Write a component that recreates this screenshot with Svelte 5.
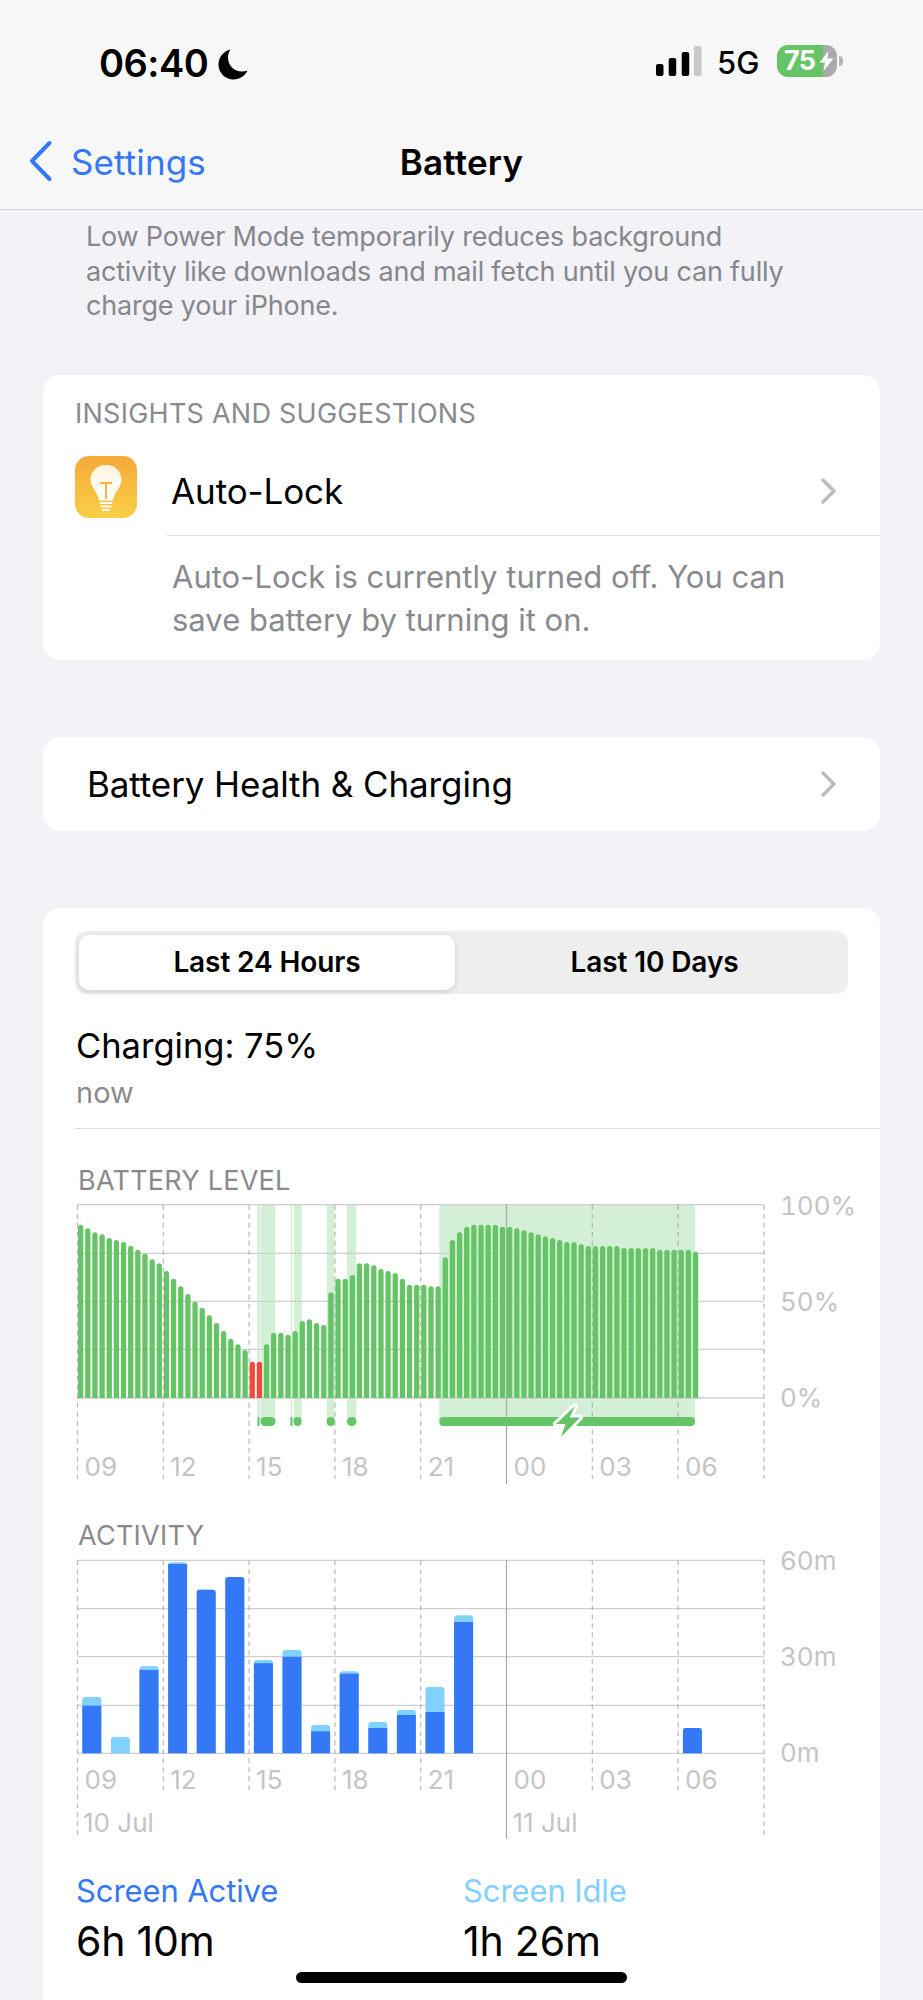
<script>
  // tops of the 15 minute bars, measured from the chart zoom (3x), base is 687
  const levelTops = [167,178,190,196,207,213,219,230,242,254,271,283,306,329,352,375,398,416,439,462,486,509,526,543,578,578,526,491,491,497,486,456,451,462,468,370,329,329,318,283,283,289,300,306,312,329,347,347,347,352,352,265,213,190,173,167,167,167,167,173,173,178,184,190,196,202,207,213,219,219,225,231,231,231,231,231,237,237,237,237,237,242,242,242,242,242,248];
  const levelBars = levelTops.map((top, i) => ({
    x: 78.0 + i * 7.15,
    y: 1170 + top / 3,
    h: (687 - top) / 3,
    low: i === 24 || i === 25
  }));

  const gridX = [0, 1, 2, 3, 4, 5, 6, 7, 8].map((i) => 77.5 + i * 85.8);
  const hours = ['09', '12', '15', '18', '21', '00', '03', '06'];
  const solid = 5;

  const bands = [
    [257.3, 260], [260.7, 275.3], [290.7, 292.3], [293.7, 301.7], [326.7, 334.7], [347, 356.3], [439.3, 695]
  ];

  // [dark top, light top] in 3x zoom px, base 763
  const activity = [[620,594],[763,714],[513,502],[195,190],[272,272],[234,234],[493,483],[473,453],[697,678],[524,517],[687,669],[648,633],[639,564],[369,349]];
  activity[21] = [687, 687];
  const activityBars = [];
  activity.forEach((a, i) => {
    if (!a) return;
    activityBars.push({ x: 82.3 + i * 28.6, dark: 1500 + a[0] / 3, light: 1500 + a[1] / 3 });
  });
  const base = 1754.3;
</script>

<div class="page">
  <header class="top">
    <div class="status">
      <div class="time">
        <span>06:40</span>
        <svg class="moon" width="30" height="31" viewBox="0 0 30 31"><path d="M12.5 0.5C5.3 2.3 0.5 8.400 0.5 15.500C0.500 24 7.300 30.500 15.500 30.500C21.700 30.500 27 27 29.500 21.500C27.800 22.200 25.800 22.500 24 22.500C16 22.500 10 16.500 10 8.500C10 5.600 10.900 2.800 12.500 0.500Z" /></svg>
      </div>
      <div class="status-right">
        <svg width="34" height="31" viewBox="0 0 34 31" class="signal">
          <rect x="0" y="18" width="7.500" height="12" rx="2" />
          <rect x="12.700" y="12" width="7.500" height="18" rx="2" />
          <rect x="25.700" y="6" width="7.500" height="24" rx="2" />
        </svg>
        <svg width="8" height="31" viewBox="0 0 8 31" class="signal-off"><rect x="0" y="0" width="7.500" height="30" rx="2" /></svg>
        <span class="net">5G</span>
        <div class="batt">
          <span class="batt-num">75</span>
          <svg class="batt-bolt" width="15" height="20" viewBox="0 0 15 20"><path d="M9.500 0L0.500 11.500H6L4.500 20L14.500 7.500H8.500Z" /></svg>
        </div>
        <div class="nub"></div>
      </div>
    </div>
    <nav class="nav">
      <div class="back">
        <svg width="25" height="42" viewBox="0 0 25 42"><path d="M21.500 3L4 21L21.500 39" /></svg>
        <span>Settings</span>
      </div>
      <div class="title">Battery</div>
    </nav>
  </header>

  <p class="lpm">Low Power Mode temporarily reduces background<br />activity like downloads and mail fetch until you can fully<br />charge your iPhone.</p>

  <section class="card insights">
    <div class="caps first">INSIGHTS AND SUGGESTIONS</div>
    <div class="insight-row">
      <div class="bulb">
        <svg width="62" height="62" viewBox="0 0 62 62">
          <defs>
            <linearGradient id="glass" x1="0" y1="0" x2="0" y2="1">
              <stop offset="0" stop-color="#fdf3df" />
              <stop offset="1" stop-color="#ffffff" />
            </linearGradient>
          </defs>
          <path d="M31 9C21.500 9 15.500 16 15.500 23.500C15.500 30 20 33.500 22.500 39.500C23.300 41.300 24 43 24.500 44.500H37.500C38 43 38.700 41.300 39.500 39.500C42 33.500 46.500 30 46.500 23.500C46.500 16 40.500 9 31 9Z" fill="url(#glass)" />
          <path d="M25 27H37M31 27V43" class="filament" />
          <path d="M25.500 47H36.500M26.500 50.500H35.500M28 54H34" class="screw" />
        </svg>
      </div>
      <div class="insight-main">
        <span class="body">Auto-Lock</span>
        <svg class="chev" width="17" height="26" viewBox="0 0 17 26"><path d="M3 2L14 13L3 24" /></svg>
      </div>
    </div>
    <div class="insight-desc">Auto-Lock is currently turned off. You can save battery by turning it on.</div>
  </section>

  <section class="card health">
    <span class="body">Battery Health &amp; Charging</span>
    <svg class="chev" width="17" height="26" viewBox="0 0 17 26"><path d="M3 2L14 13L3 24" /></svg>
  </section>

  <section class="card usage">
    <div class="segment">
      <div class="seg active">Last 24 Hours</div>
      <div class="seg other">Last 10 Days</div>
    </div>
    <div class="charging">Charging: 75%</div>
    <div class="now">now</div>
    <div class="rule"></div>

    <div class="caps chart-title">BATTERY LEVEL</div>
    <svg class="chart" width="837" height="312" viewBox="43 1183 837 312">
      {#each bands as b}
        <rect x={b[0]} y="1205.700" width={b[1] - b[0]} height="216" class="band" />
      {/each}
      {#each [1205.7, 1254.3, 1302.3, 1350.3, 1399] as y}
        <line x1="77.500" x2="764" y1={y} y2={y} class="grid" />
      {/each}
      {#each levelBars as bar}
        <path d="M{bar.x} 1399V{bar.y + 2.650}a2.650 2.650 0 0 1 5.300 0V1399Z" class={bar.low ? 'bar-low' : 'bar'} />
      {/each}
      {#each gridX as x, i}
        {#if i === solid}
          <line x1={x} x2={x} y1="1205.700" y2="1485" class="solid" />
        {:else}
          <line x1={x} x2={x} y1="1205.700" y2="1480" class="dash" />
        {/if}
      {/each}
      <rect x="257.500" y="1418" width="2" height="9" class="bar" />
      <rect x="260.500" y="1418" width="15" height="9" rx="4.500" class="bar" />
      <rect x="290.500" y="1418" width="2" height="9" class="bar" />
      <rect x="293.500" y="1418" width="8" height="9" rx="4" class="bar" />
      <rect x="326.700" y="1418" width="8" height="9" rx="4" class="bar" />
      <rect x="347" y="1418" width="9.500" height="9" rx="4.500" class="bar" />
      <rect x="439.300" y="1418" width="255.700" height="9" rx="4" class="bar" />
      <path d="M575 1407L556 1425H565.500L561 1438L580 1418.500H569.500Z" class="bolt" />
      {#each hours as h, i}
        <text x={gridX[i] + 7} y="1477" class="tick">{h}</text>
      {/each}
      <text x="780" y="1216" class="tick axis">100%</text>
      <text x="780" y="1312" class="tick axis">50%</text>
      <text x="780" y="1408" class="tick axis">0%</text>
    </svg>

    <div class="caps chart-title second">ACTIVITY</div>
    <svg class="chart" width="837" height="312" viewBox="43 1538 837 312">
      {#each [1561.3, 1609.7, 1657.7, 1706.3, 1754.3] as y}
        <line x1="77.500" x2="764" y1={y} y2={y} class="grid" />
      {/each}
      {#each gridX as x, i}
        {#if i === solid}
          <line x1={x} x2={x} y1="1561.300" y2="1840" class="solid" />
        {:else}
          <line x1={x} x2={x} y1="1561.300" y2={i === 0 || i === 8 ? 1836 : 1793} class="dash" />
        {/if}
      {/each}
      {#each activityBars as bar}
        <path d="M{bar.x} {base}V{bar.light + 3}a3 3 0 0 1 3 -3h13a3 3 0 0 1 3 3V{base}Z" class="idle" />
        {#if bar.dark < base}
          <path d="M{bar.x} {base}V{bar.dark + (bar.dark === bar.light ? 3 : 0)}{bar.dark === bar.light ? 'a3 3 0 0 1 3 -3h13a3 3 0 0 1 3 3' : 'h19'}V{base}Z" class="active-bar" />
        {/if}
      {/each}
      {#each hours as h, i}
        <text x={gridX[i] + 7} y="1790" class="tick">{h}</text>
      {/each}
      <text x="83" y="1833" class="tick">10 Jul</text>
      <text x="512.500" y="1833" class="tick">11 Jul</text>
      <text x="780" y="1571" class="tick axis">60m</text>
      <text x="780" y="1667" class="tick axis">30m</text>
      <text x="780" y="1763" class="tick axis">0m</text>
    </svg>

    <div class="totals">
      <div class="total">
        <div class="total-label blue">Screen Active</div>
        <div class="total-value">6h 10m</div>
      </div>
      <div class="total">
        <div class="total-label sky">Screen Idle</div>
        <div class="total-value">1h 26m</div>
      </div>
    </div>
  </section>

  <div class="home"></div>
</div>

<style>
  :global(body) {
    margin: 0;
    background: #f2f2f7;
  }

  .page {
    position: relative;
    width: 923px;
    height: 2000px;
    overflow: hidden;
    background: #f2f2f7;
    font-family: Inter, "Liberation Sans", sans-serif;
    color: #000;
  }

  .top {
    height: 209px;
    background: #f7f7f7;
    border-bottom: 1.500px solid #d4d4d6;
  }

  .status {
    height: 120px;
    display: flex;
    justify-content: space-between;
    align-items: flex-start;
    padding: 0 80px 0 99px;
  }

  .time {
    display: flex;
    align-items: center;
    gap: 10px;
    margin-top: 42px;
    font-size: 38px;
    line-height: 42px;
    font-weight: 600;
    letter-spacing: -0.5px;
  }

  .moon {
    margin-top: 2px;
  }

  .status-right {
    display: flex;
    align-items: flex-start;
    margin-top: 46px;
    position: relative;
  }

  .signal rect {
    fill: #000;
  }

  .signal-off {
    margin-left: 4px;
  }

  .signal-off rect {
    fill: #c8c8c8;
  }

  .net {
    margin-left: 15px;
    margin-top: 2px;
    font-size: 31px;
    line-height: 30px;
    font-weight: 500;
    width: 60px;
  }

  .batt {
    position: relative;
    width: 60px;
    height: 32px;
    margin-top: -1px;
    border-radius: 11px;
    background: linear-gradient(90deg, #65c466 76%, #aaaaaa 76%);
  }

  .batt-num {
    position: absolute;
    left: 7px;
    top: 3px;
    font-size: 27px;
    line-height: 26px;
    font-weight: 700;
    color: #fff;
    letter-spacing: -0.8px;
  }

  .batt-bolt {
    position: absolute;
    left: 42px;
    top: 6px;
  }

  .batt-bolt path {
    fill: #fff;
  }

  .nub {
    width: 4px;
    height: 10px;
    margin: 10px 0 0 2px;
    background: #b5b5b5;
    border-radius: 0 4px 4px 0;
  }

  .nav {
    position: relative;
    height: 88px;
    display: flex;
    align-items: flex-start;
    justify-content: center;
  }

  .back {
    position: absolute;
    left: 28px;
    top: 21px;
    display: flex;
    align-items: center;
    gap: 18px;
    color: #3478f6;
    font-size: 35px;
    line-height: 42px;
    letter-spacing: 0.1px;
  }

  .back svg {
    margin-top: -3px;
  }

  .back path {
    fill: none;
    stroke: #3478f6;
    stroke-width: 4;
    stroke-linecap: round;
    stroke-linejoin: round;
  }

  .title {
    margin-top: 21px;
    font-size: 35px;
    line-height: 42px;
    font-weight: 600;
    letter-spacing: 0.2px;
  }

  .lpm {
    margin: 10px 0 0 86px;
    width: 800px;
    font-size: 27px;
    line-height: 34.500px;
    color: #87878b;
    letter-spacing: -0.2px;
  }

  .card {
    margin: 0 43px;
    background: #fff;
    border-radius: 17px;
  }

  .insights {
    margin-top: 51px;
    height: 285px;
    padding-left: 32px;
    box-sizing: border-box;
  }

  .caps {
    font-size: 27px;
    line-height: 30px;
    color: #8a8a8e;
    letter-spacing: 0.25px;
  }

  .first {
    padding-top: 24px;
  }

  .insight-row {
    display: flex;
    margin-top: 27px;
  }

  .bulb {
    width: 62px;
    height: 62px;
    border-radius: 14px;
    background: linear-gradient(#f5aa3a, #f9cf45);
    flex: none;
  }

  .filament {
    fill: none;
    stroke: #f5b53f;
    stroke-width: 2;
  }

  .screw {
    fill: none;
    stroke: #fff;
    stroke-width: 2;
    stroke-linecap: round;
  }

  .insight-main {
    flex: 1;
    display: flex;
    justify-content: space-between;
    align-items: center;
    height: 82px;
    margin: -2px 0 0 30px;
    padding: 0 43px 7px 4px;
    box-sizing: border-box;
    border-bottom: 1.500px solid #dcdcde;
  }

  .body {
    font-size: 35px;
    line-height: 40px;
    letter-spacing: -0.1px;
  }

  .chev path {
    fill: none;
    stroke: #bcbcc0;
    stroke-width: 3.500;
    stroke-linecap: round;
    stroke-linejoin: round;
  }

  .insight-desc {
    margin: 19px 60px 0 97px;
    font-size: 31px;
    line-height: 43px;
    color: #8a8a8e;
  }

  .health {
    margin-top: 77px;
    height: 94px;
    display: flex;
    justify-content: space-between;
    align-items: center;
    padding: 0 43px 0 44px;
  }

  .usage {
    margin-top: 77px;
    height: 1200px;
    border-radius: 17px 17px 0 0;
    padding-top: 23px;
  }

  .segment {
    margin: 0 32px;
    height: 63px;
    padding: 4px;
    box-sizing: border-box;
    display: flex;
    border-radius: 12px;
    background: #eeeeef;
  }

  .seg {
    flex: 1;
    display: flex;
    align-items: center;
    justify-content: center;
    font-size: 28px;
    font-weight: 600;
    letter-spacing: -0.1px;
  }

  .other {
    padding-left: 10px;
  }

  .active {
    flex: none;
    width: 376px;
    background: #fff;
    border-radius: 10px;
    box-shadow: 0 2px 6px rgba(0, 0, 0, 0.14);
  }

  .charging {
    margin: 31px 0 0 33px;
    font-size: 34.500px;
    line-height: 42px;
  }

  .now {
    margin: 9px 0 0 33px;
    font-size: 29px;
    line-height: 34px;
    color: #8a8a8e;
  }

  .rule {
    margin: 18px 0 0 32px;
    border-top: 1.500px solid #dcdcde;
  }

  .chart-title {
    margin: 37px 0 0 35px;
  }

  .chart-title.second {
    margin-top: 27px;
  }

  .chart {
    display: block;
    margin-top: -14px;
  }

  .band {
    fill: #d3efd6;
  }

  .grid {
    stroke: #cfcfd1;
    stroke-width: 1.300;
  }

  .dash {
    stroke: #a8a8aa;
    stroke-width: 1.200;
    stroke-dasharray: 5 4;
    opacity: 0.8;
  }

  .solid {
    stroke: #a8a8aa;
    stroke-width: 1.200;
  }

  .bar {
    fill: #65c466;
  }

  .bar-low {
    fill: #ef4b3c;
  }

  .bolt {
    fill: #65c466;
    stroke: #fff;
    stroke-width: 6;
    stroke-linejoin: round;
    paint-order: stroke;
  }

  .idle {
    fill: #81d0fe;
  }

  .active-bar {
    fill: #3478f6;
  }

  .tick {
    fill: #c4c4c6;
    font-size: 26px;
  }

  .axis {
    font-variant-numeric: tabular-nums;
  }

  .totals {
    display: flex;
    margin: 24px 0 0 33px;
  }

  .total {
    width: 387px;
  }

  .total-label {
    font-size: 31px;
    line-height: 36px;
    letter-spacing: -0.1px;
  }

  .blue {
    color: #3478f6;
  }

  .sky {
    color: #81d0fe;
  }

  .total-value {
    margin-top: 10px;
    font-size: 41px;
    line-height: 44px;
    letter-spacing: -0.2px;
  }

  .home {
    position: absolute;
    left: 296px;
    top: 1972px;
    width: 331px;
    height: 11px;
    border-radius: 6px;
    background: #000;
  }
</style>
